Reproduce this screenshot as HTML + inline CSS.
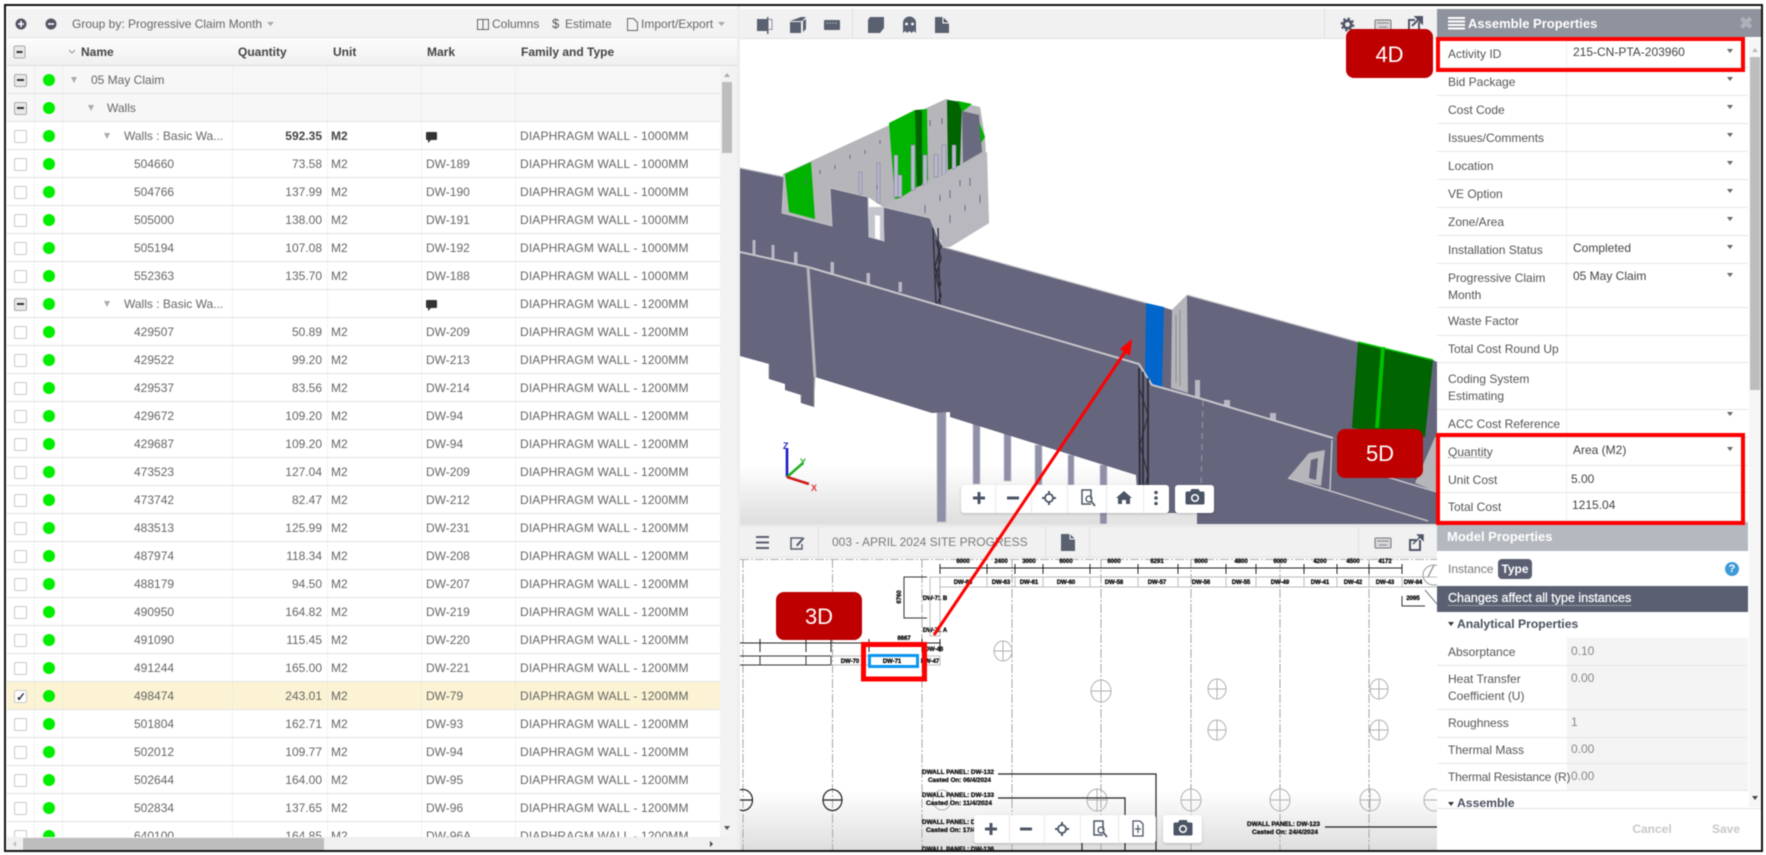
<!DOCTYPE html>
<html><head><meta charset="utf-8">
<style>
html,body{margin:0;padding:0;background:#fff;width:1766px;height:855px;overflow:hidden}
#w{position:absolute;left:0;top:0;width:1766px;height:855px;overflow:hidden;font:12px/1 "Liberation Sans",sans-serif;color:#555;filter:blur(.45px)}
.a,.a>*{position:absolute}
#tb{left:7px;top:9px;width:730px;height:28px;background:#f3f3f3;border-bottom:1px solid #e3e3e3;line-height:30px}
#tb span{position:absolute;top:0;white-space:nowrap;color:#666}
#hd{left:7px;top:38px;width:730px;height:27px;background:linear-gradient(#fdfdfd,#f0f0f0);border-bottom:2px solid #dcdcdc;line-height:28px;font-weight:bold;color:#444}
#hd span{position:absolute;top:0;white-space:nowrap}
#gr{left:7px;top:66px;width:713px;height:771px;overflow:hidden;background:#fff}
.r{position:absolute;left:0;width:713px;height:27px;border-bottom:1px solid #e2e2e2;line-height:28px;white-space:nowrap;color:#666}
.r span{position:absolute;top:0}
.g{background:#f7f7f7}
.s{background:#fbf3d3}
.c{left:7px;top:8px!important;width:11px;height:11px;border:1px solid #c8c8c8;border-radius:2px;background:#fff}
.h{background:#e8e8ea;border-color:#aaa}
.h:after{content:"";position:absolute;left:2px;top:4px;width:7px;height:2px;background:#333}
.k:after{content:"✓";position:absolute;left:1px;top:-8px;font-size:12px;color:#334;font-weight:bold}
.d{left:36px;top:8px!important;width:12px;height:12px;border-radius:50%;background:#00ee00}
.q{right:398px;text-align:right}
.u{left:324px}
.m{left:419px}
.f{left:513px;letter-spacing:.15px}
.b{font-weight:bold;color:#444}
.t{width:0;height:0;border-left:3.5px solid transparent;border-right:3.5px solid transparent;border-top:6px solid #aaa;top:11px!important}
.cm{left:419px;top:10px!important;width:11px;height:8px;background:#333;border-radius:1px}
.cm:after{content:"";position:absolute;left:2px;top:8px;width:0;height:0;border-top:3px solid #333;border-right:3px solid transparent}
.l{position:absolute;top:66px;height:771px;width:0;border-left:1px dotted #e6e6e6}
#pp{left:1437px;top:9px;width:325px;height:842px;background:#fff;overflow:hidden}
.pr{position:absolute;left:0;width:311px;border-bottom:1px solid #e6e6e6;background:#fff}
.pr b{position:absolute;left:11px;font-weight:normal;line-height:17px;color:#555;white-space:nowrap}
.pr i{position:absolute;left:136px;font-style:normal;color:#444;line-height:14px;white-space:nowrap}
.pr u{position:absolute;left:129px;top:0;bottom:0;width:0;border-left:1px solid #eee;text-decoration:none}
.pr em{position:absolute;left:290px;top:9px;width:0;height:0;border-left:3.5px solid transparent;border-right:3.5px solid transparent;border-top:4px solid #666}
.ro i{color:#888}
.ro u{left:130px;right:0;width:auto;background:#f4f4f4;border:0}
.ro i{z-index:1}
</style></head><body>
<div id="w">

<div class="a" id="tb">
<span style="left:65px">Group by: Progressive Claim Month</span>
<span style="left:485px">Columns</span>
<span style="left:545px;font-size:13px;color:#555">$</span>
<span style="left:558px">Estimate</span>
<span style="left:634px">Import/Export</span>
</div>
<div class="a" id="hd">
<span style="left:74px">Name</span><span style="left:231px">Quantity</span><span style="left:326px">Unit</span><span style="left:420px">Mark</span><span style="left:514px">Family and Type</span>
</div>

<div class="a" id="gr">
<div class="r g" style="top:0"><span class="c h"></span><span class="d"></span><span class="t" style="left:64px"></span><span style="left:84px">05 May Claim</span></div>
<div class="r g" style="top:28px"><span class="c h"></span><span class="d"></span><span class="t" style="left:81px"></span><span style="left:100px">Walls</span></div>
<div class="r" style="top:56px"><span class="c"></span><span class="d"></span><span class="t" style="left:97px"></span><span style="left:117px">Walls : Basic Wa...</span><span class="q b">592.35</span><span class="u b">M2</span><span class="cm"></span><span class="f">DIAPHRAGM WALL - 1000MM</span></div>
<div class="r" style="top:84px"><span class="c"></span><span class="d"></span><span style="left:127px">504660</span><span class="q">73.58</span><span class="u">M2</span><span class="m">DW-189</span><span class="f">DIAPHRAGM WALL - 1000MM</span></div>
<div class="r" style="top:112px"><span class="c"></span><span class="d"></span><span style="left:127px">504766</span><span class="q">137.99</span><span class="u">M2</span><span class="m">DW-190</span><span class="f">DIAPHRAGM WALL - 1000MM</span></div>
<div class="r" style="top:140px"><span class="c"></span><span class="d"></span><span style="left:127px">505000</span><span class="q">138.00</span><span class="u">M2</span><span class="m">DW-191</span><span class="f">DIAPHRAGM WALL - 1000MM</span></div>
<div class="r" style="top:168px"><span class="c"></span><span class="d"></span><span style="left:127px">505194</span><span class="q">107.08</span><span class="u">M2</span><span class="m">DW-192</span><span class="f">DIAPHRAGM WALL - 1000MM</span></div>
<div class="r" style="top:196px"><span class="c"></span><span class="d"></span><span style="left:127px">552363</span><span class="q">135.70</span><span class="u">M2</span><span class="m">DW-188</span><span class="f">DIAPHRAGM WALL - 1000MM</span></div>
<div class="r" style="top:224px"><span class="c h"></span><span class="d"></span><span class="t" style="left:97px"></span><span style="left:117px">Walls : Basic Wa...</span><span class="cm"></span><span class="f">DIAPHRAGM WALL - 1200MM</span></div>
<div class="r" style="top:252px"><span class="c"></span><span class="d"></span><span style="left:127px">429507</span><span class="q">50.89</span><span class="u">M2</span><span class="m">DW-209</span><span class="f">DIAPHRAGM WALL - 1200MM</span></div>
<div class="r" style="top:280px"><span class="c"></span><span class="d"></span><span style="left:127px">429522</span><span class="q">99.20</span><span class="u">M2</span><span class="m">DW-213</span><span class="f">DIAPHRAGM WALL - 1200MM</span></div>
<div class="r" style="top:308px"><span class="c"></span><span class="d"></span><span style="left:127px">429537</span><span class="q">83.56</span><span class="u">M2</span><span class="m">DW-214</span><span class="f">DIAPHRAGM WALL - 1200MM</span></div>
<div class="r" style="top:336px"><span class="c"></span><span class="d"></span><span style="left:127px">429672</span><span class="q">109.20</span><span class="u">M2</span><span class="m">DW-94</span><span class="f">DIAPHRAGM WALL - 1200MM</span></div>
<div class="r" style="top:364px"><span class="c"></span><span class="d"></span><span style="left:127px">429687</span><span class="q">109.20</span><span class="u">M2</span><span class="m">DW-94</span><span class="f">DIAPHRAGM WALL - 1200MM</span></div>
<div class="r" style="top:392px"><span class="c"></span><span class="d"></span><span style="left:127px">473523</span><span class="q">127.04</span><span class="u">M2</span><span class="m">DW-209</span><span class="f">DIAPHRAGM WALL - 1200MM</span></div>
<div class="r" style="top:420px"><span class="c"></span><span class="d"></span><span style="left:127px">473742</span><span class="q">82.47</span><span class="u">M2</span><span class="m">DW-212</span><span class="f">DIAPHRAGM WALL - 1200MM</span></div>
<div class="r" style="top:448px"><span class="c"></span><span class="d"></span><span style="left:127px">483513</span><span class="q">125.99</span><span class="u">M2</span><span class="m">DW-231</span><span class="f">DIAPHRAGM WALL - 1200MM</span></div>
<div class="r" style="top:476px"><span class="c"></span><span class="d"></span><span style="left:127px">487974</span><span class="q">118.34</span><span class="u">M2</span><span class="m">DW-208</span><span class="f">DIAPHRAGM WALL - 1200MM</span></div>
<div class="r" style="top:504px"><span class="c"></span><span class="d"></span><span style="left:127px">488179</span><span class="q">94.50</span><span class="u">M2</span><span class="m">DW-207</span><span class="f">DIAPHRAGM WALL - 1200MM</span></div>
<div class="r" style="top:532px"><span class="c"></span><span class="d"></span><span style="left:127px">490950</span><span class="q">164.82</span><span class="u">M2</span><span class="m">DW-219</span><span class="f">DIAPHRAGM WALL - 1200MM</span></div>
<div class="r" style="top:560px"><span class="c"></span><span class="d"></span><span style="left:127px">491090</span><span class="q">115.45</span><span class="u">M2</span><span class="m">DW-220</span><span class="f">DIAPHRAGM WALL - 1200MM</span></div>
<div class="r" style="top:588px"><span class="c"></span><span class="d"></span><span style="left:127px">491244</span><span class="q">165.00</span><span class="u">M2</span><span class="m">DW-221</span><span class="f">DIAPHRAGM WALL - 1200MM</span></div>
<div class="r s" style="top:616px"><span class="c k"></span><span class="d"></span><span style="left:127px">498474</span><span class="q">243.01</span><span class="u">M2</span><span class="m">DW-79</span><span class="f">DIAPHRAGM WALL - 1200MM</span></div>
<div class="r" style="top:644px"><span class="c"></span><span class="d"></span><span style="left:127px">501804</span><span class="q">162.71</span><span class="u">M2</span><span class="m">DW-93</span><span class="f">DIAPHRAGM WALL - 1200MM</span></div>
<div class="r" style="top:672px"><span class="c"></span><span class="d"></span><span style="left:127px">502012</span><span class="q">109.77</span><span class="u">M2</span><span class="m">DW-94</span><span class="f">DIAPHRAGM WALL - 1200MM</span></div>
<div class="r" style="top:700px"><span class="c"></span><span class="d"></span><span style="left:127px">502644</span><span class="q">164.00</span><span class="u">M2</span><span class="m">DW-95</span><span class="f">DIAPHRAGM WALL - 1200MM</span></div>
<div class="r" style="top:728px"><span class="c"></span><span class="d"></span><span style="left:127px">502834</span><span class="q">137.65</span><span class="u">M2</span><span class="m">DW-96</span><span class="f">DIAPHRAGM WALL - 1200MM</span></div>
<div class="r" style="top:756px"><span class="c"></span><span class="d"></span><span style="left:127px">640100</span><span class="q">164.85</span><span class="u">M2</span><span class="m">DW-96A</span><span class="f">DIAPHRAGM WALL - 1200MM</span></div>
</div>
<div class="l" style="left:34px"></div><div class="l" style="left:62px"></div><div class="l" style="left:232px"></div><div class="l" style="left:327px"></div><div class="l" style="left:421px"></div><div class="l" style="left:515px"></div>

<!-- centre SVG + left-pane chrome -->
<svg class="a" style="left:0;top:0" width="1766" height="855" viewBox="0 0 1766 855" font-family="Liberation Sans, sans-serif">
<defs>
<linearGradient id="fl" x1="0" y1="0" x2="0" y2="1"><stop offset="0" stop-color="#fff"/><stop offset="1" stop-color="#dedede"/></linearGradient>
<clipPath id="v3"><rect x="740" y="39" width="697" height="485"/></clipPath>
<clipPath id="v2"><rect x="740" y="558" width="697" height="293"/></clipPath>
<filter id="sh" x="-10%" y="-20%" width="120%" height="150%"><feDropShadow dx="0" dy="1" stdDeviation="1.2" flood-color="#000" flood-opacity=".2"/></filter>
</defs>

<!-- left pane chrome -->
<circle cx="21" cy="24" r="5.5" fill="#556"/><path d="M18 24h6M21 21v6" stroke="#fff" stroke-width="1.6"/>
<circle cx="51" cy="24" r="5.5" fill="#556"/><path d="M48 24h6" stroke="#fff" stroke-width="1.6"/>
<path d="M267 22h7l-3.5 4z" fill="#aaa"/>
<path d="M477.5 19.5h11v10h-11zM483 19.5v10" fill="none" stroke="#666"/>
<path d="M627.5 18.5h6l4 4v8h-10z" fill="none" stroke="#666"/>
<path d="M718 22h7l-3.5 4z" fill="#aaa"/>
<rect x="14" y="46" width="11" height="12" rx="1.5" fill="#e8e8ea" stroke="#aaa"/><path d="M16.5 52h6" stroke="#333" stroke-width="2"/>
<path d="M69 50l3 3 3-3" fill="none" stroke="#999"/>
<rect x="720" y="66" width="17" height="771" fill="#f3f3f3"/>
<rect x="722" y="82" width="10" height="71" fill="#bdbdbd"/>
<path d="M724 77l3-4 3 4z" fill="#aaa"/><path d="M724 826h6l-3 4z" fill="#555"/>
<rect x="7" y="837" width="730" height="14" fill="#f0f0f0"/>
<rect x="23" y="838" width="301" height="12" fill="#bdbdbd"/>
<path d="M16 841v6l-3-3z" fill="#bbb"/><path d="M710 841v6l3-3z" fill="#444"/>
<rect x="737" y="5" width="3" height="846" fill="#eee"/>

<!-- 3D viewer -->
<rect x="740" y="9" width="697" height="30" fill="#f1f1f1"/><path d="M740 38.5h697" stroke="#e2e2e2"/>
<path d="M852.5 9v29M1324.5 9v29" stroke="#e0e0e0"/>
<g fill="#59606f">
<path d="M757 19h10v12h-10z"/><path d="M767 17h1.5v17H767z"/><path d="M768 19.5h4v10h-4" fill="none" stroke="#8a8f9a"/>
<path d="M790 21l11-4h5l-4 4h-12zM790 22h11v11h-11zM803 21l3-2v10l-3 3z"/>
<rect x="824" y="20" width="16" height="10" rx="1"/>
<path d="M870 17h14v11l-4 5h-12v-13z"/>
<path d="M903 33V23a6.5 6.5 0 0 1 13 0v10l-2.2-2-2.2 2-2.100-2-2.200 2-2.100-2z"/>
<path d="M935 17h8l6 6v10h-14z"/>
</g>
<path d="M826 23h12" stroke="#aab" stroke-dasharray="2 1"/>
<circle cx="906.500" cy="24" r="1.400" fill="#fff"/><circle cx="912.500" cy="24" r="1.400" fill="#fff"/>
<path d="M943 17v6h6" fill="none" stroke="#fff"/>
<circle cx="1347.500" cy="24.500" r="3.800" fill="none" stroke="#4e5566" stroke-width="2.800"/>
<circle cx="1347.500" cy="24.500" r="6" fill="none" stroke="#4e5566" stroke-width="1.800" stroke-dasharray="2.400 2.300"/>
<rect x="1375" y="20" width="16" height="10" rx="1" fill="#d8d8dc" stroke="#777"/>
<path d="M1377 23h12M1379 27h8" stroke="#888"/>
<path d="M1419 22v8h-10v-10h6" fill="none" stroke="#4e5566" stroke-width="2"/><path d="M1412 26l8-8M1416 17h6v6z" stroke="#4e5566" stroke-width="2" fill="#4e5566"/>

<rect x="740" y="39" width="697" height="485" fill="#fff"/>
<rect x="740" y="465" width="697" height="59" fill="url(#fl)"/>
<g clip-path="url(#v3)">
<!-- piles -->
<g fill="#8f8fa8" stroke="#c2c2d0" stroke-width=".8">
<rect x="937" y="412" width="9" height="110"/><rect x="973" y="418" width="7" height="66"/><rect x="1004" y="432" width="7" height="49"/><rect x="1035" y="445" width="7" height="40"/><rect x="1068" y="455" width="6" height="30"/><rect x="1100" y="465" width="7" height="59"/>
</g>
<!-- upper light walls -->
<polygon fill="#b5b5ba" points="783,174 946,99 980,107 985,137 989,223 950,247 937,227 930,218 883,207 868,197 830,188 832,226 782,213"/>
<polygon fill="#00b300" points="785,174 811,162 815,219 789,212"/>
<polygon fill="#00b300" points="889,123 915,110 927,109 928,180 900,198 895,199"/>
<polygon fill="#006400" points="915,110 922,110 922,185 917,187"/>
<polygon fill="#006400" points="947,100 962,102 960,165 948,170"/>
<polygon fill="#00b300" points="958,101 972,104 962,112"/>
<polygon fill="#69697f" points="962,111 979,115 982,152 963,163"/>
<polygon fill="#00b300" points="979,122 985,137 981,143"/>
<g fill="#b8b8d0" stroke="#7a7a90" stroke-width=".5">
<rect x="894" y="155" width="4" height="42"/><rect x="898" y="175" width="4" height="22"/><rect x="911" y="145" width="4" height="45"/><rect x="923" y="155" width="4" height="30"/><rect x="934" y="155" width="4" height="22"/><rect x="942" y="145" width="4" height="30"/><rect x="952" y="145" width="4" height="24"/><rect x="859" y="172" width="3" height="22"/><rect x="877" y="163" width="3" height="40"/>
</g>
<polygon fill="#b8b8be" points="883,207 987,152 989,223 950,247 943,247 930,218"/>
<g stroke="#6e6e80" stroke-width="1">
<path d="M806 180v4M820 170v4M835 165v4M850 155v4M865 150v4M880 140v4M930 120v6M950 190v8M960 180v6M970 178v8M925 205v8M940 195v6M950 215v8M965 205v6M980 195v8M915 215v6M845 205v6M860 200v4M877 185v4M942 118v6"/>
</g>
<!-- back walls -->
<polygon fill="#65657d" points="740,168 784,177 782,213 832,226 830,188 868,197 869,237 884,241 883,207 930,218 939,240 943,247 1146,303 1163,307 1172,310 1187,295 1358,342 1433,360 1437,362 1437,492 1333,438 1202,399 1152,385 1139,364 808,267 740,252"/>
<path d="M740 168l44 9M943 247l203 56M1187 295l171 47" fill="none" stroke="#c0c0c4" stroke-width="1.500" stroke-dasharray="1.500 .8"/>
<path d="M784 177l-2 36 50 13-2-38 38 9 1 40 15 4-1-34 47 11 9 22" fill="none" stroke="#c2c2c8" stroke-width="1"/>
<polygon fill="#c4c4cc" points="869,207 884,207 884,241 869,237"/>
<polygon fill="#fff" points="875,215 880,216 880,240 875,238"/>
<polygon fill="#0066cc" points="1146,303 1164,307 1162,387 1145,382"/>
<polygon fill="#b5b5ba" points="1172,310 1187,295 1188,393 1171,388"/>
<path d="M1176 315v68M1180 310v76" stroke="#8b8b95"/>
<polygon fill="#006400" points="1358,342 1433,360 1425,437 1352,428"/>
<polygon fill="#00c000" points="1381,347 1385,347 1379,428 1375,428"/>
<path d="M1358 342l75 18" stroke="#00cc00" stroke-width="1.500"/>
<!-- rebar -->
<g fill="none" stroke="#2c2c38" stroke-width="1.300">
<path d="M933 228l3 77M938 228l2 77M936 240l5 18-5 18 5 20-4 8M941 245l-6 22 6 18"/>
</g>
<g fill="#b8b8c4">
<rect x="752.500" y="240" width="3" height="15"/><rect x="771.500" y="245" width="3" height="15"/><rect x="794" y="252" width="3.500" height="14"/><rect x="830.500" y="262" width="3.500" height="12"/><rect x="866.500" y="273" width="3.500" height="12"/><rect x="898.500" y="282" width="3.500" height="10"/>
<rect x="1195" y="380" width="5" height="18"/><rect x="1224" y="400" width="6" height="6"/><rect x="1270" y="413" width="6" height="7"/>
</g>
<!-- front wall -->
<polygon fill="#65657d" points="740,252 808,267 1139,364 1152,385 1202,399 1333,438 1437,492 1437,524 1139,524 1136,475 950,417 950,412 932,413 815,377 814,407 801,403 801,395 785,390 785,384 769,379 769,364 740,356"/>
<path d="M740 252l68 15 331 97 13 21 50 14 131 39" fill="none" stroke="#c6c6cc" stroke-width="2"/>
<path d="M808 267l7 110" stroke="#b5b5ba" stroke-width="3"/>
<path d="M814 377v30M769 364v15M801 395v8" stroke="#999"/>
<path d="M1203 400l-2 90" stroke="#9a9aaa" stroke-dasharray="6 5"/>
<g fill="none" stroke="#2c2c38" stroke-width="1.800">
<path d="M1139 368l1 156M1143 372v152M1148 378v146"/><path d="M1140 390l8 25-8 30 8 30-8 30" stroke-width="1"/>
</g>
<!-- lower right -->
<polygon fill="#b5b5ba" points="1288,478 1309,453 1325,450 1321,486"/>
<polygon fill="#65657d" points="1311,460 1318,458 1316,480 1309,478"/>
<path d="M1332 440l-2 50" stroke="#c2c2c8" stroke-width="1.500"/>
<path d="M1288 478l140 43" stroke="#c2c2c8" stroke-width="1.500"/>
<path d="M1387 477l50 15" stroke="#c2c2c8" stroke-width="1.500"/>
<polygon fill="#b5b5ba" points="1415,483 1435,437 1437,437 1437,492"/>
<rect x="1107" y="513" width="90" height="11" fill="#e4e4e4"/>
</g>
<rect x="740" y="524" width="697" height="3" fill="#e8e8e8"/>

<!-- axes -->
<path d="M787 477V448" stroke="#1515c8" stroke-width="2.500"/><path d="M787 477l16-14" stroke="#22b022" stroke-width="2.500"/><path d="M787 477l22 7" stroke="#d01818" stroke-width="2.500"/>
<text x="783" y="449" font-size="9" font-weight="bold" fill="#2020c0">Z</text><text x="800" y="465" font-size="9" font-weight="bold" fill="#22b022">Y</text><text x="811" y="491" font-size="9" font-weight="bold" fill="#e03030">X</text>

<!-- 3D nav -->
<rect x="961" y="485" width="208" height="28" rx="3" fill="#fff" filter="url(#sh)"/>
<rect x="1175" y="485" width="39" height="28" rx="3" fill="#fff" filter="url(#sh)"/>
<path d="M995.500 485v28M1031.500 485v28M1067.500 485v28M1106.500 485v28M1143.500 485v28" stroke="#e9e9e9"/>
<g stroke="#4c5566" fill="none">
<path d="M973 498h12M979 492v12M1007 498h12" stroke-width="3"/>
<circle cx="1049" cy="498" r="4" stroke-width="1.800"/><path d="M1049 491v3M1049 502v3M1042 498h3M1053 498h3" stroke-width="2"/>
<path d="M1091 504h-9v-14h9v9" stroke-width="1.500"/><circle cx="1089" cy="499" r="3" stroke-width="1.300"/><path d="M1091 501l4 5" stroke-width="1.800"/>
</g>
<path d="M1124 491l8 7h-2v6h-4v-4h-4v4h-4v-6h-2z" fill="#4c5566"/>
<g fill="#4c5566"><circle cx="1156" cy="492.500" r="1.800"/><circle cx="1156" cy="498" r="1.800"/><circle cx="1156" cy="503.500" r="1.800"/></g>
<path d="M1187 491.500h3l1.500-2.500h7l1.500 2.500h3a1.500 1.500 0 0 1 1.500 1.500v10a1.500 1.500 0 0 1-1.500 1.500h-16a1.500 1.500 0 0 1-1.500-1.500v-10a1.500 1.500 0 0 1 1.500-1.500z" fill="#4c5566"/><circle cx="1195" cy="498" r="3.300" fill="none" stroke="#fff" stroke-width="1.500"/>

<!-- drawing toolbar -->
<rect x="740" y="527" width="697" height="31" fill="#f1f1f1"/><path d="M740 557.500h697" stroke="#e2e2e2"/>
<path d="M818.500 527v30M1045.500 527v30M1089.500 527v30M1358.500 527v30" stroke="#e0e0e0"/>
<path d="M756 537h13M756 542.500h13M756 548h13" stroke="#59606f" stroke-width="2"/>
<path d="M802 538h-11v11h11v-5" fill="none" stroke="#59606f" stroke-width="1.500"/><path d="M796 545l7-8 1.500 1.500-7 8z" fill="#59606f"/>
<text x="832" y="546" font-size="12" fill="#7a7a7a">003 - APRIL 2024 SITE PROGRESS</text>
<path d="M1061 534h9l5 5v12h-14z" fill="#59606f"/><path d="M1070 534v5h5" fill="none" stroke="#fff"/>
<rect x="1375" y="538" width="16" height="10" rx="1" fill="#d8d8dc" stroke="#777"/><path d="M1377 541h12M1379 545h8" stroke="#888"/>
<path d="M1420 540v10h-10v-10h6" fill="none" stroke="#4e5566" stroke-width="2"/><path d="M1413 544l8-8M1418 535h5v5z" stroke="#4e5566" stroke-width="1.500" fill="#4e5566"/>

<!-- drawing -->
<rect x="740" y="558" width="697" height="293" fill="#fff"/>
<rect x="740" y="790" width="697" height="61" fill="url(#fl)"/>
<g clip-path="url(#v2)" font-weight="bold" fill="#111">
<path d="M743 559v292M832.500 559v292M922 559v292M1012 559v292M1101 559v292M1191 559v292M1280 559v292M1369 559v292" stroke="#a5a5a5" stroke-dasharray="9 2 2 2"/>
<path d="M740 559.500h697" stroke="#aaa" stroke-dasharray="9 2 2 2"/>
<path d="M940 568h462M940 564v10M987 564v10M1015 564v10M1043 564v10M1090 564v10M1138 564v10M1178 564v10M1226 564v10M1256 564v10M1304 564v10M1337 564v10M1369 564v10M1402 564v10" stroke="#222" fill="none"/>
<path d="M940 577h497M940 587h497M987 577v10M1015 577v10M1043 577v10M1090 577v10M1138 577v10M1178 577v10M1226 577v10M1256 577v10M1304 577v10M1337 577v10M1369 577v10M1402 577v10" stroke="#bbb" fill="none"/>
<g font-size="6" text-anchor="middle" stroke="#111" stroke-width=".35">
<text x="963" y="563">6000</text><text x="1001" y="563">2400</text><text x="1029" y="563">3000</text><text x="1066" y="563">6000</text><text x="1114" y="563">6000</text><text x="1157" y="563">6291</text><text x="1201" y="563">6000</text><text x="1241" y="563">4800</text><text x="1280" y="563">6000</text><text x="1320" y="563">4200</text><text x="1353" y="563">4500</text><text x="1385" y="563">4172</text>
<text x="963" y="584">DW-65</text><text x="1001" y="584">DW-63</text><text x="1029" y="584">DW-61</text><text x="1066" y="584">DW-60</text><text x="1114" y="584">DW-58</text><text x="1157" y="584">DW-57</text><text x="1201" y="584">DW-56</text><text x="1241" y="584">DW-55</text><text x="1280" y="584">DW-49</text><text x="1320" y="584">DW-41</text><text x="1353" y="584">DW-42</text><text x="1385" y="584">DW-43</text><text x="1413" y="584">DW-84</text>
<text x="935" y="600">DW-71 B</text><text x="935" y="632">DW-71 A</text><text x="904" y="640">6667</text><text x="934" y="651">DW-46</text><text x="930" y="663">DW-47</text><text x="850" y="663">DW-70</text><text x="1413" y="600">2095</text>
<text transform="translate(901,597) rotate(-90)">6760</text>
</g>
<path d="M927 577h-23v41h23" fill="none" stroke="#333"/>
<rect x="930" y="577" width="10" height="59" fill="none" stroke="#bbb"/>
<path d="M1402 596v10h23M1402 596v10" fill="none" stroke="#333"/>
<path d="M1434 565l-6 12M1425 590l12 14" stroke="#777"/>
<ellipse cx="1434" cy="575" rx="11" ry="10" fill="none" stroke="#999"/>
<path d="M740 643h200M760 639v13M806 639v13M831 639v13M869 639v13M922 639v13M940 639v13" stroke="#222" fill="none"/>
<path d="M740 656h91M740 665h91M760 656v9M806 656v9M831 656v9" stroke="#333" fill="none"/>
<path d="M831 656h37M831 665h37M922 656h18v9h-18" stroke="#bbb" fill="none"/>
<rect x="869.500" y="655.500" width="48" height="11" fill="#fff" stroke="#0a96f0" stroke-width="3"/>
<text x="892" y="663" font-size="6" text-anchor="middle" stroke="#111" stroke-width=".35">DW-71</text>
<g fill="none" stroke="#b0b0b0">
<ellipse cx="1003" cy="651" rx="9" ry="10"/><ellipse cx="1101" cy="691" rx="10" ry="11"/><ellipse cx="1217" cy="689" rx="9" ry="10"/><ellipse cx="1379" cy="689" rx="9" ry="10"/><ellipse cx="1217" cy="730" rx="9" ry="10"/><ellipse cx="1379" cy="730" rx="9" ry="10"/>
<path d="M994 651h18M1003 641v20M1091 691h20M1101 680v22M1208 689h18M1217 679v20M1370 689h18M1379 679v20M1208 730h18M1217 720v20M1370 730h18M1379 720v20"/>
<ellipse cx="942" cy="800" rx="9" ry="10"/><ellipse cx="1097" cy="800" rx="10" ry="11"/><ellipse cx="1191" cy="800" rx="10" ry="11"/><ellipse cx="1280" cy="800" rx="10" ry="11"/><ellipse cx="1370" cy="800" rx="10" ry="11"/><ellipse cx="1434" cy="800" rx="10" ry="11"/>
<path d="M1087 800h20M1181 800h20M1270 800h20M1360 800h20M1424 800h20M1097 789v22M1191 789v22M1280 789v22M1370 789v22"/>
</g>
<g fill="none" stroke="#222" stroke-width="1.200">
<ellipse cx="743" cy="800" rx="9.500" ry="10.500"/><path d="M733 800h20"/>
<ellipse cx="832.500" cy="800" rx="9.500" ry="10.500"/><path d="M823 800h19"/>
<path d="M998 774h158v77M998 798h127v53M1325 827h112M1082 843v8"/>
</g>
<g font-size="6.500" stroke="#111" stroke-width=".3">
<text x="922" y="774" textLength="72" lengthAdjust="spacingAndGlyphs">DWALL PANEL: DW-132</text><text x="928" y="782" textLength="63" lengthAdjust="spacingAndGlyphs">Casted On: 06/4/2024</text>
<text x="922" y="797" textLength="72" lengthAdjust="spacingAndGlyphs">DWALL PANEL: DW-133</text><text x="926" y="805" textLength="66" lengthAdjust="spacingAndGlyphs">Casted On: 11/4/2024</text>
<text x="922" y="824" textLength="72" lengthAdjust="spacingAndGlyphs">DWALL PANEL: DW-134</text><text x="926" y="832" textLength="66" lengthAdjust="spacingAndGlyphs">Casted On: 17/4/2024</text>
<text x="922" y="851" textLength="72" lengthAdjust="spacingAndGlyphs">DWALL PANEL: DW-136</text>
<text x="1247" y="826" textLength="73" lengthAdjust="spacingAndGlyphs">DWALL PANEL: DW-123</text><text x="1252" y="834" textLength="66" lengthAdjust="spacingAndGlyphs">Casted On: 24/4/2024</text>
<text x="1247" y="855" textLength="73" lengthAdjust="spacingAndGlyphs">DWALL PANEL: DW-124</text>
</g>
</g>

<!-- drawing nav -->
<rect x="974" y="815" width="182" height="28" rx="3" fill="#fff" filter="url(#sh)"/>
<rect x="1163" y="815" width="39" height="28" rx="3" fill="#fff" filter="url(#sh)"/>
<path d="M1009.500 815v28M1044.500 815v28M1080.500 815v28M1118.500 815v28" stroke="#e9e9e9"/>
<g stroke="#4c5566" fill="none">
<path d="M985 829h12M991 823v12M1020 829h12" stroke-width="3"/>
<circle cx="1062" cy="829" r="4" stroke-width="1.800"/><path d="M1062 822v3M1062 833v3M1055 829h3M1066 829h3" stroke-width="2"/>
<path d="M1103 835h-9v-14h9v9" stroke-width="1.500"/><circle cx="1101" cy="830" r="3" stroke-width="1.300"/><path d="M1103 832l4 5" stroke-width="1.800"/>
<path d="M1133 821h7l3 3v12h-10z" stroke-width="1.300"/><path d="M1138 825v8M1135 829h6" stroke-width="1.200"/>
</g>
<path d="M1175 822.500h3l1.500-2.500h7l1.500 2.500h3a1.500 1.500 0 0 1 1.500 1.500v10a1.500 1.500 0 0 1-1.500 1.500h-16a1.500 1.500 0 0 1-1.500-1.500v-10a1.500 1.500 0 0 1 1.500-1.500z" fill="#4c5566"/><circle cx="1183" cy="829" r="3.300" fill="none" stroke="#fff" stroke-width="1.500"/>
</svg>

<!-- properties panel -->
<div class="a" id="pp">
<div style="position:absolute;left:0;top:0;width:325px;height:28px;background:#8f939e;color:#fff;font-weight:bold;font-size:13px;line-height:29px"><span style="position:absolute;left:31px">Assemble Properties</span>
<span style="position:absolute;left:11px;top:8px;width:17px;height:13px;background:repeating-linear-gradient(#fff 0 2px,#8f939e 2px 3.5px)"></span>
<span style="position:absolute;left:302px;top:0;font-size:17px;color:#aeb1b8;line-height:30px">✖</span></div>

<div class="pr" style="top:31px;height:27px"><u></u><b style="top:6px">Activity ID</b><i style="top:5px">215-CN-PTA-203960</i><em></em></div>
<div class="pr" style="top:59px;height:27px"><u></u><b style="top:6px">Bid Package</b><em></em></div>
<div class="pr" style="top:87px;height:27px"><u></u><b style="top:6px">Cost Code</b><em></em></div>
<div class="pr" style="top:115px;height:27px"><u></u><b style="top:6px">Issues/Comments</b><em></em></div>
<div class="pr" style="top:143px;height:27px"><u></u><b style="top:6px">Location</b><em></em></div>
<div class="pr" style="top:171px;height:27px"><u></u><b style="top:6px">VE Option</b><em></em></div>
<div class="pr" style="top:199px;height:27px"><u></u><b style="top:6px">Zone/Area</b><em></em></div>
<div class="pr" style="top:227px;height:27px"><u></u><b style="top:6px">Installation Status</b><i style="top:5px">Completed</i><em></em></div>
<div class="pr" style="top:255px;height:43px"><u></u><b style="top:6px">Progressive Claim<br>Month</b><i style="top:5px">05 May Claim</i><em></em></div>
<div class="pr" style="top:299px;height:27px"><u></u><b style="top:5px">Waste Factor</b></div>
<div class="pr" style="top:327px;height:26px"><u></u><b style="top:5px">Total Cost Round Up</b></div>
<div class="pr" style="top:354px;height:46px"><u></u><b style="top:8px">Coding System<br>Estimating</b></div>
<div class="pr" style="top:401px;height:27px"><u></u><b style="top:6px">ACC Cost Reference</b><em style="top:2px"></em></div>
<div class="pr" style="top:429px;height:27px"><u></u><b style="top:6px;text-decoration:underline dotted #888">Quantity</b><i style="top:5px;left:136px">Area (M2)</i><em></em></div>
<div class="pr" style="top:457px;height:26px"><u></u><b style="top:6px">Unit Cost</b><i style="top:6px;left:134px">5.00</i></div>
<div class="pr" style="top:484px;height:27px"><u></u><b style="top:6px">Total Cost</b><i style="top:5px;left:135px">1215.04</i></div>

<div style="position:absolute;left:0;top:513px;width:311px;height:29px;background:#b4b8bf;color:#fff;font-weight:bold;font-size:13px;line-height:30px;padding-left:10px;box-sizing:border-box">Model Properties</div>
<div style="position:absolute;left:11px;top:553px;color:#777;line-height:14px">Instance</div>
<div style="position:absolute;left:61px;top:550px;width:34px;height:20px;background:#5a6072;border-radius:4px;color:#fff;font-weight:bold;line-height:20px;text-align:center">Type</div>
<div style="position:absolute;left:288px;top:553px;width:14px;height:14px;border-radius:50%;background:#3d9ad8;color:#fff;font-weight:bold;font-size:11px;line-height:14px;text-align:center">?</div>
<div style="position:absolute;left:0;top:577px;width:311px;height:26px;background:#5a6072;color:#fff;font-size:12.5px;line-height:25px;padding-left:11px;box-sizing:border-box;-webkit-text-stroke:.25px #fff"><span style="border-bottom:1px dotted #ccc">Changes affect all type instances</span></div>
<div style="position:absolute;left:20px;top:608px;font-weight:bold;font-size:12.2px;color:#4a5060;line-height:14px">Analytical Properties</div>
<div style="position:absolute;left:11px;top:613px;width:0;height:0;border-left:3.5px solid transparent;border-right:3.5px solid transparent;border-top:4px solid #333"></div>

<div class="pr ro" style="top:629px;height:27px"><u></u><b style="top:6px">Absorptance</b><i style="top:6px;left:134px">0.10</i></div>
<div class="pr ro" style="top:657px;height:43px"><u></u><b style="top:5px">Heat Transfer<br>Coefficient (U)</b><i style="top:5px;left:134px">0.00</i></div>
<div class="pr ro" style="top:701px;height:27px"><u></u><b style="top:5px">Roughness</b><i style="top:5px;left:134px">1</i></div>
<div class="pr ro" style="top:729px;height:25px"><u></u><b style="top:4px">Thermal Mass</b><i style="top:4px;left:134px">0.00</i></div>
<div class="pr ro" style="top:755px;height:26px"><u></u><b style="top:5px;letter-spacing:-.2px">Thermal Resistance (R)</b><i style="top:5px;left:134px">0.00</i></div>
<div style="position:absolute;left:0;top:782px;width:325px;height:17px;overflow:hidden"><span style="position:absolute;left:20px;top:5px;font-weight:bold;font-size:12.2px;color:#4a5060;line-height:14px">Assemble</span><span style="position:absolute;left:11px;top:11px;width:0;height:0;border-left:3.5px solid transparent;border-right:3.5px solid transparent;border-top:4px solid #333"></span></div>
<div style="position:absolute;left:0;top:799px;width:325px;height:43px;background:#fff;border-top:1px solid #e2e2e2"></div>
<div style="position:absolute;left:182px;top:813px;width:66px;text-align:center;color:#c8c8c8;font-weight:bold;line-height:14px">Cancel</div>
<div style="position:absolute;left:264px;top:813px;width:50px;text-align:center;color:#c8c8c8;font-weight:bold;line-height:14px">Save</div>

<div style="position:absolute;left:312px;top:30px;width:12px;height:768px;background:#f6f6f6"></div>
<div style="position:absolute;left:313px;top:48px;width:10px;height:333px;background:#bdbdbd"></div>
<div style="position:absolute;left:315px;top:39px;width:0;height:0;border-left:3.5px solid transparent;border-right:3.5px solid transparent;border-bottom:4px solid #bbb"></div>
<div style="position:absolute;left:315px;top:787px;width:0;height:0;border-left:3.5px solid transparent;border-right:3.5px solid transparent;border-top:4px solid #444"></div>
</div>

<!-- annotations -->
<svg class="a" style="left:0;top:0" width="1766" height="855" viewBox="0 0 1766 855" font-family="Liberation Sans, sans-serif">
<rect x="1438" y="39" width="305" height="31" fill="none" stroke="#f00" stroke-width="4"/>
<rect x="1438" y="435" width="305" height="88" fill="none" stroke="#f00" stroke-width="4"/>
<rect x="863.500" y="644.500" width="61" height="34.500" fill="none" stroke="#f00" stroke-width="5"/>
<path d="M934 635L1127 349" stroke="#f00" stroke-width="3" fill="none"/>
<polygon points="1132,339 1130,356 1120,349" fill="#f00"/>
<g fill="#bf0000"><rect x="1346" y="29" width="87" height="49" rx="8"/><rect x="1337" y="429" width="86" height="49" rx="8"/><rect x="776" y="592" width="86" height="48" rx="8"/></g>
<g fill="#fff" font-size="22" text-anchor="middle"><text x="1389.500" y="62">4D</text><text x="1380" y="461">5D</text><text x="819" y="624">3D</text></g>
<rect x="5" y="5" width="1757" height="846" fill="none" stroke="#111" stroke-width="2"/>
</svg>
</div>
</body></html>
